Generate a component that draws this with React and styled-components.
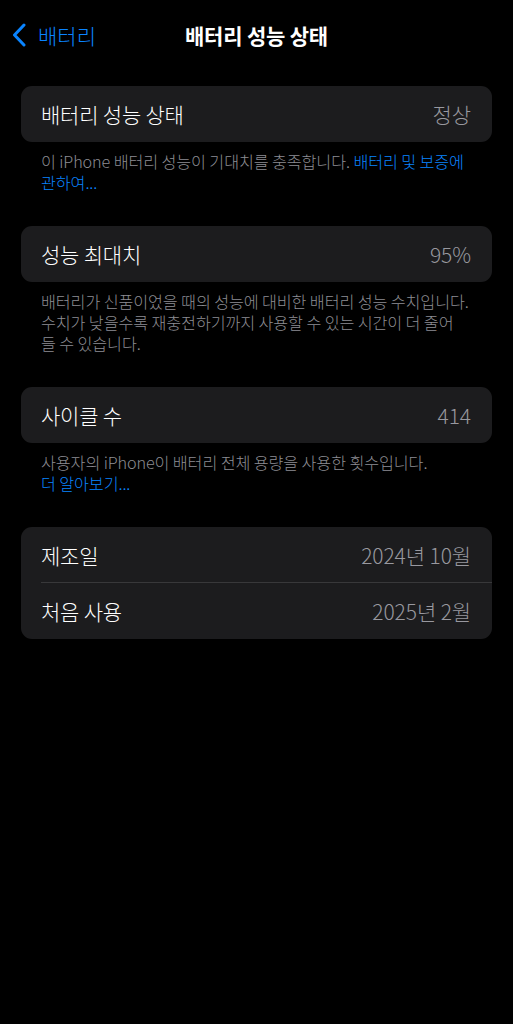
import React from "react";
import styled, { createGlobalStyle } from "styled-components";

const Global = createGlobalStyle`
  html, body { margin: 0; padding: 0; background: #000; }
  body { font-family: "Noto Sans CJK KR", "Noto Sans", sans-serif; -webkit-font-smoothing: antialiased; }
`;

const Page = styled.div`
  width: 513px;
  min-height: 1024px;
  background: #000;
  color: #fff;
`;

const NavBar = styled.header`
  position: relative;
  height: 70px;
  display: flex;
  align-items: center;
  justify-content: center;
`;

const BackButton = styled.button`
  position: absolute;
  left: 11px;
  top: 50%;
  transform: translateY(-50%);
  display: flex;
  align-items: center;
  gap: 11px;
  background: none;
  border: 0;
  padding: 0;
  color: #0a84ff;
  font-family: inherit;
  font-size: 21px;
  font-weight: 300;
  cursor: pointer;
`;

const Title = styled.h1`
  margin: 0;
  font-size: 21px;
  font-weight: 700;
  color: #fff;
  letter-spacing: -0.2px;
`;

const Content = styled.main`
  padding: 16px 21px 0;
  display: flex;
  flex-direction: column;
  gap: 33px;
`;

const Section = styled.section`
  display: flex;
  flex-direction: column;
`;

const Card = styled.div`
  background: #1c1c1e;
  border-radius: 11px;
  overflow: hidden;
`;

const Row = styled.div`
  height: 56px;
  display: flex;
  align-items: center;
  justify-content: space-between;
  padding: 0 21px 0 20px;
  position: relative;
  ${(p) =>
    p.$divider &&
    `
    &::after {
      content: "";
      position: absolute;
      left: 20px;
      right: 0;
      bottom: 0;
      height: 1px;
      background: #38383a;
    }
  `}
`;

const Label = styled.span`
  font-size: 21px;
  font-weight: 300;
  color: #fff;
  letter-spacing: -0.2px;
`;

const Value = styled.span`
  font-size: 21px;
  font-weight: 300;
  color: #98989f;
  letter-spacing: -0.1px;
`;

const Footer = styled.p`
  margin: 0;
  padding: 9px 20px 0;
  font-size: 16.2px;
  font-weight: 300;
  line-height: 21px;
  color: #8d8d93;
  letter-spacing: -0.1px;
  white-space: nowrap;
`;

const Link = styled.a`
  color: #0a84ff;
  text-decoration: none;
`;

function Chevron() {
  return (
    <svg width="16" height="24" viewBox="0 0 16 24" fill="none">
      <path
        d="M13 2 L3.5 12 L13 22"
        stroke="#0a84ff"
        strokeWidth="3"
        strokeLinecap="round"
        strokeLinejoin="round"
      />
    </svg>
  );
}

export default function App() {
  return (
    <Page>
      <Global />
      <NavBar>
        <BackButton>
          <Chevron />
          배터리
        </BackButton>
        <Title>배터리 성능 상태</Title>
      </NavBar>
      <Content>
        <Section>
          <Card>
            <Row>
              <Label>배터리 성능 상태</Label>
              <Value>정상</Value>
            </Row>
          </Card>
          <Footer>
            이 iPhone 배터리 성능이 기대치를 충족합니다. <Link>배터리 및 보증에</Link>
            <br />
            <Link>관하여...</Link>
          </Footer>
        </Section>
        <Section>
          <Card>
            <Row>
              <Label>성능 최대치</Label>
              <Value>95%</Value>
            </Row>
          </Card>
          <Footer>
            배터리가 신품이었을 때의 성능에 대비한 배터리 성능 수치입니다.
            <br />
            수치가 낮을수록 재충전하기까지 사용할 수 있는 시간이 더 줄어
            <br />들 수 있습니다.
          </Footer>
        </Section>
        <Section>
          <Card>
            <Row>
              <Label>사이클 수</Label>
              <Value>414</Value>
            </Row>
          </Card>
          <Footer>
            사용자의 iPhone이 배터리 전체 용량을 사용한 횟수입니다.
            <br />
            <Link>더 알아보기...</Link>
          </Footer>
        </Section>
        <Section>
          <Card>
            <Row $divider>
              <Label>제조일</Label>
              <Value>2024년 10월</Value>
            </Row>
            <Row>
              <Label>처음 사용</Label>
              <Value>2025년 2월</Value>
            </Row>
          </Card>
        </Section>
      </Content>
    </Page>
  );
}
